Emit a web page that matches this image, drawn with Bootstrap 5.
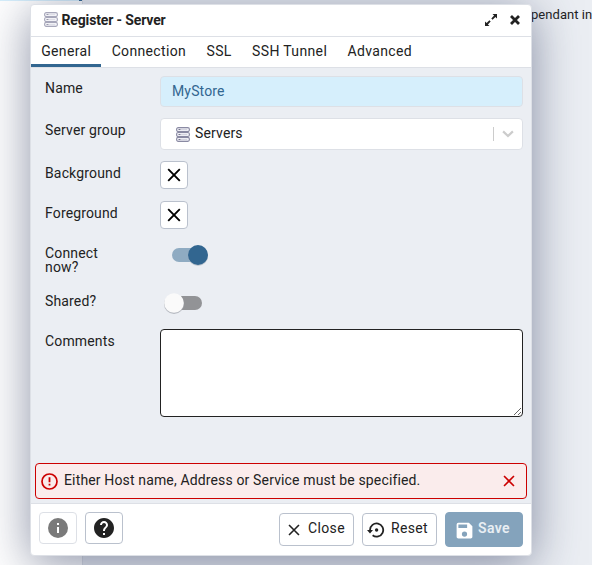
<!DOCTYPE html>
<html lang="en">
<head>
<meta charset="utf-8">
<meta name="viewport" content="width=device-width, initial-scale=1">
<title>Register - Server</title>
<link href="https://cdn.jsdelivr.net/npm/bootstrap@5.3.0/dist/css/bootstrap.min.css" rel="stylesheet">
<style>
body{font-family:Roboto,"Liberation Sans",sans-serif;font-size:14px;line-height:20px;letter-spacing:.15px;color:#222;background:#ebeef3;height:565px;overflow:hidden}
svg{display:block;flex:none}
.tree-pane{width:82px;background:#fff;border-top:1px solid #d6effc}
.tree-pane i{position:absolute;left:79px;top:0;width:3px;height:1px;background:#326690}
.main-pane{border-left:1px solid #dde0e6}
.main-text{font-size:13px;letter-spacing:.05px;padding:5px 0 0 448px;white-space:nowrap}
.dialog{position:absolute;left:30px;top:4px;width:502px;height:552px;background:#fff;border:1px solid #dde0e6;border-radius:4px;box-shadow:0 8px 48px rgba(50,61,96,.56);overflow:hidden}
.dialog-head{height:32px;border-bottom:1px solid #dde0e6;padding:0 8px 2px 13px}
.dialog-title{font-weight:700;letter-spacing:-.14px;margin-left:3.5px}
.tabs{height:31px;border-bottom:1px solid #dde0e6}
.tabs .nav-link{color:#222;padding:4px 10.2px 0;height:30px;border-bottom:3px solid transparent;letter-spacing:.35px}
.tabs .nav-link.active{border-color:#326690}
.dialog-body{background:#ebeef3;height:435px;padding:8px 4px 4px}
.line{display:grid;grid-template-columns:115px 1fr;padding:0 4px 0 10px}
.line>label{padding-top:2px;letter-spacing:.15px}
.name-field{height:31px;background:#d6effc;color:#326690;border:1px solid #dde0e6;border-radius:4px;padding:0 11px 1px;font-size:14px;letter-spacing:.15px}
.pick{height:32px;background:#fff;border:1px solid #dde0e6;border-radius:4px;padding:0 8px 0 15px}
.swatch-btn{width:28px;height:28px;background:#fff;border:1px solid #bac1cd;border-radius:4px;padding:0}
.comment-field{height:88px;border:1px solid #222;border-radius:4px;background:#fff;resize:vertical;width:100%;display:block}
.alert-line{height:36px;border:1px solid #c00;border-radius:4px;background:#faecec;padding:0 11px 0 5px;color:#222}
.dialog-foot{border-top:1px solid #dde0e6;padding:8px 8px 0}
.foot-btn{height:33px;border:1px solid #bac1cd;border-radius:4px;background:#fff;color:#222;padding:0 7px;font-size:14px;line-height:20px;display:flex;align-items:center;letter-spacing:.35px}
.foot-btn span{margin-top:-3px}
.foot-icon{width:38px;height:32px;justify-content:center;padding:0}
.foot-save{background:#84a3bc;border-color:#84a3bc;color:#e8eef3;font-weight:600;width:78px;height:35px;padding-left:8px}
</style>
<script src="https://cdn.jsdelivr.net/npm/bootstrap@5.3.0/dist/js/bootstrap.bundle.min.js"></script>
</head>
<body>
<svg width="0" height="0" class="position-absolute">
 <symbol id="servers" viewBox="0 0 14 15"><g fill="#eeeef4" stroke="#8a8aa3" stroke-width="1.1"><rect x=".6" y=".6" width="12.8" height="4" rx="1.6"/><rect x=".6" y="5.5" width="12.8" height="4" rx="1.6"/><rect x=".6" y="10.4" width="12.8" height="4" rx="1.6"/></g><path d="M2.5 2.5h2M2.5 7.5h2M2.5 12.5h2" stroke="#77778f"/><path d="M5 2.5h6M5 7.5h6M5 12.5h6" stroke="#d4d4df"/></symbol>
 <symbol id="cross" viewBox="0 0 14 14"><path d="M1.2 1.2 12.8 12.8M12.8 1.2 1.2 12.8" fill="none" stroke="currentColor" stroke-width="1.9"/></symbol>
</svg>
<div class="d-flex h-100">
 <div class="tree-pane flex-shrink-0"><i></i></div>
 <div class="main-pane flex-grow-1 overflow-hidden"><div class="main-text">pendant in</div></div>
</div>
<div class="dialog">
 <div class="dialog-head d-flex align-items-center">
  <svg width="14" height="15" style="opacity:.75"><use href="#servers"/></svg>
  <span class="dialog-title">Register - Server</span>
  <div class="ms-auto d-flex align-items-center">
   <svg style="margin-right:2px" width="14" height="14" viewBox="0 0 14 14" fill="#222"><path d="M8.5 1H13v4.5l-1.6-1.6-2.8 2.8-1.3-1.3 2.8-2.8zM5.500 13H1V8.500l1.600 1.600 2.800-2.800 1.300 1.300-2.800 2.800z"/></svg>
   <svg class="ms-2" style="margin-right:1px" width="14" height="14" viewBox="0 0 14 14"><path d="m3 3 8 8m0-8-8 8" stroke="#222" stroke-width="2.8"/></svg>
  </div>
 </div>
 <nav class="nav tabs flex-nowrap">
  <a class="nav-link active">General</a><a class="nav-link">Connection</a><a class="nav-link">SSL</a><a class="nav-link">SSH Tunnel</a><a class="nav-link">Advanced</a>
 </nav>
 <div class="dialog-body d-flex flex-column">
  <div class="line"><label>Name</label><input class="name-field w-100" value="MyStore"></div>
  <div class="line" style="margin-top:11px"><label>Server group</label>
   <div class="pick d-flex align-items-center"><svg width="14" height="15"><use href="#servers"/></svg><span style="margin:-2px 0 0 5px">Servers</span>
    <i class="ms-auto" style="width:1px;height:14px;background:#ccc"></i>
    <svg style="margin-left:8px" width="12" height="8" viewBox="0 0 13 8"><path d="m1.2 1.2 5.3 4.9 5.3-4.9" fill="none" stroke="#ccc" stroke-width="2.4"/></svg></div></div>
  <div class="line" style="margin-top:11px"><label>Background</label><button class="swatch-btn d-flex align-items-center justify-content-center"><svg width="14" height="14"><use href="#cross"/></svg></button></div>
  <div class="line" style="margin-top:12px"><label>Foreground</label><button class="swatch-btn d-flex align-items-center justify-content-center"><svg width="14" height="14"><use href="#cross"/></svg></button></div>
  <div class="line" style="margin-top:11px;height:48px"><label style="line-height:14px;padding-top:6px">Connect<br>now?</label>
   <svg width="58" height="30" viewBox="0 0 58 30"><rect x="12" y="8" width="34" height="14" rx="7" fill="#8fabc2"/><circle cx="38" cy="16" r="10" fill="#aeb6c1" opacity=".7"/><circle cx="38" cy="15" r="10" fill="#326690"/></svg></div>
  <div class="line" style="height:41px"><label style="padding-top:3px">Shared?</label>
   <svg width="58" height="30" viewBox="0 0 58 30"><rect x="8" y="8" width="34" height="14" rx="7" fill="#929396"/><circle cx="14" cy="16" r="10" fill="#a9adb4" opacity=".8"/><circle cx="14" cy="15" r="9.8" fill="#fafafa"/></svg></div>
  <div class="line"><label>Comments</label><textarea class="comment-field"></textarea></div>
  <div class="alert-line d-flex align-items-center mt-auto">
   <svg width="17" height="17" viewBox="0 0 17 17"><circle cx="8.5" cy="8.5" r="7.5" fill="none" stroke="#c00" stroke-width="1.7"/><path d="M8.5 4.2v5M8.5 10.8v1.8" stroke="#c00" stroke-width="1.8"/></svg>
   <span style="margin:-2px 0 0 6px;letter-spacing:.145px">Either Host name, Address or Service must be specified.</span>
   <svg class="ms-auto" width="12" height="12" color="#c00"><use href="#cross"/></svg></div>
 </div>
 <div class="dialog-foot d-flex align-items-start">
  <button class="foot-btn foot-icon" style="border-color:#dde0e6"><svg width="20" height="20" viewBox="0 0 20 20"><circle cx="10" cy="10" r="10" fill="#7a7a7a"/><path d="M9 9h2v6H9zM9 5h2v2H9z" fill="#fff"/></svg></button>
  <button class="foot-btn foot-icon ms-2"><svg width="20" height="20" viewBox="2 2 20 20"><path fill="#222" d="M12 2C6.48 2 2 6.48 2 12s4.48 10 10 10 10-4.48 10-10S17.52 2 12 2zm1 17h-2v-2h2v2zm2.07-7.75-.9.92C13.45 12.9 13 13.5 13 15h-2v-.5c0-1.1.45-2.1 1.17-2.83l1.24-1.26c.37-.36.59-.86.59-1.41 0-1.1-.9-2-2-2s-2 .9-2 2H8c0-2.21 1.79-4 4-4s4 1.79 4 4c0 .88-.36 1.68-.93 2.25z"/></svg></button>
  <button class="foot-btn ms-auto" style="width:75px;margin-top:1px;padding-left:8px"><svg width="12" height="12" style="margin-top:1px"><use href="#cross"/></svg><span style="margin-left:8px">Close</span></button>
  <button class="foot-btn ms-2" style="width:75px;margin-top:1px;padding-left:4px"><svg width="18" height="16" viewBox="0 0 18 16" style="margin-top:1px"><path d="M3 8a6.600 6.600 0 1 1 2.600 5.300" fill="none" stroke="#222" stroke-width="1.800"/><path d="M0 8h6l-3 3.400z" fill="#222"/><circle cx="9.600" cy="8" r="1.700" fill="#222"/></svg><span style="margin-left:6px">Reset</span></button>
  <button class="foot-btn foot-save ms-2"><svg width="21" height="21" viewBox="0 0 24 24" style="margin-top:2px"><path fill="#fff" d="M17 3H5a2 2 0 0 0-2 2v14c0 1.1.9 2 2 2h14c1.1 0 2-.9 2-2V7l-4-4zm-5 16a3 3 0 1 1 0-6 3 3 0 0 1 0 6zm3-10H5V5h10v4z"/></svg><span style="margin-left:3px">Save</span></button>
 </div>
</div>
</body>
</html>
